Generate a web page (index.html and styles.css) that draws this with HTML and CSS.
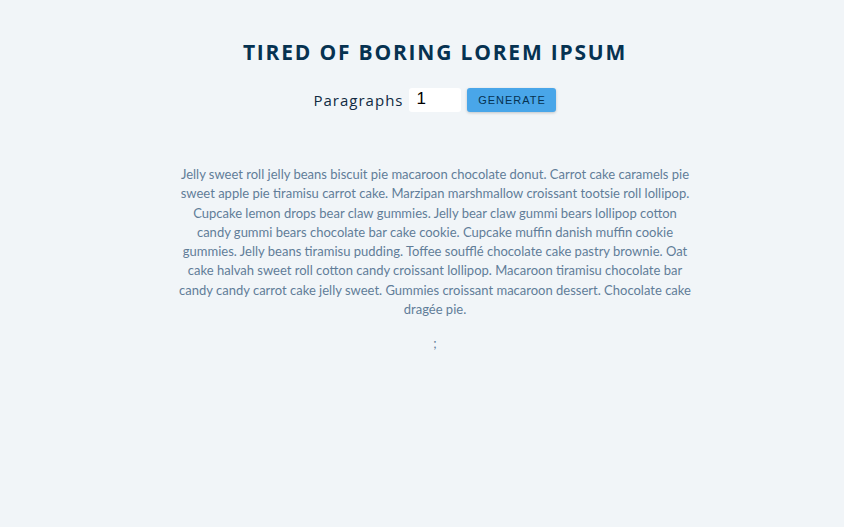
FILE: index.html
```html
<!DOCTYPE html>
<html>
<head>
<meta charset="utf-8">
<link rel="stylesheet" href="styles.css">
</head>
<body>
<section class="section-center">
  <h3 class="title">tired of boring lorem ipsum</h3>
  <form class="lorem-form">
    <label class="label" for="amount">paragraphs</label>
    <input class="amount" type="number" id="amount" value="1">
    <button class="btn" type="button">generate</button>
  </form>
  <article class="lorem-text">
    <p>Jelly sweet roll jelly beans biscuit pie macaroon chocolate donut. Carrot cake caramels pie sweet apple pie tiramisu carrot cake. Marzipan marshmallow croissant tootsie roll lollipop. Cupcake lemon drops bear claw gummies. Jelly bear claw gummi bears lollipop cotton candy gummi bears chocolate bar cake cookie. Cupcake muffin danish muffin cookie gummies. Jelly beans tiramisu pudding. Toffee soufflé chocolate cake pastry brownie. Oat cake halvah sweet roll cotton candy croissant lollipop. Macaroon tiramisu chocolate bar candy candy carrot cake jelly sweet. Gummies croissant macaroon dessert. Chocolate cake dragée pie.</p>
    <p>;</p>
  </article>
</section>
</body>
</html>
```
FILE: styles.css
```css
* { box-sizing: border-box; margin: 0; padding: 0; }
body {
  background: #f1f5f8;
  font-family: "Open Sans", "Noto Sans", sans-serif;
  color: #102a42;
  line-height: 1.5;
  padding-left: 26px;
}
.section-center {
  width: 512px;
  margin: 39px auto 0;
  text-align: center;
}
.title {
  text-transform: uppercase;
  font-size: 21px;
  font-weight: 700;
  letter-spacing: 1.8px;
  color: #063251;
  line-height: 26px;
}
.lorem-form {
  display: flex;
  justify-content: center;
  align-items: center;
  margin-top: 23px;
  margin-bottom: 53px;
}
.label {
  text-transform: capitalize;
  font-size: 15px;
  letter-spacing: 1px;
  color: #102a42;
}
.amount {
  width: 52px;
  height: 24px;
  border: none;
  border-radius: 3px;
  background: #fff;
  margin: 0 6px;
  padding: 0 7px 3px;
  font-family: "Liberation Sans", Arial, sans-serif;
  font-size: 17px;
  color: #000;
}
.amount::-webkit-inner-spin-button { -webkit-appearance: none; }
.btn {
  text-transform: uppercase;
  background: #49a6e9;
  color: #063251;
  width: 89px;
  height: 24px;
  border: none;
  border-radius: 3px;
  font-family: "Liberation Sans", Arial, sans-serif;
  font-size: 11px;
  letter-spacing: 1px;
  box-shadow: 0 1px 3px rgba(0,0,0,0.2);
}
.lorem-text p {
  font-family: Lato, "Open Sans", sans-serif;
  color: #617d98;
  font-size: 13px;
  line-height: 19.3px;
  margin-bottom: 15px;
}
```
